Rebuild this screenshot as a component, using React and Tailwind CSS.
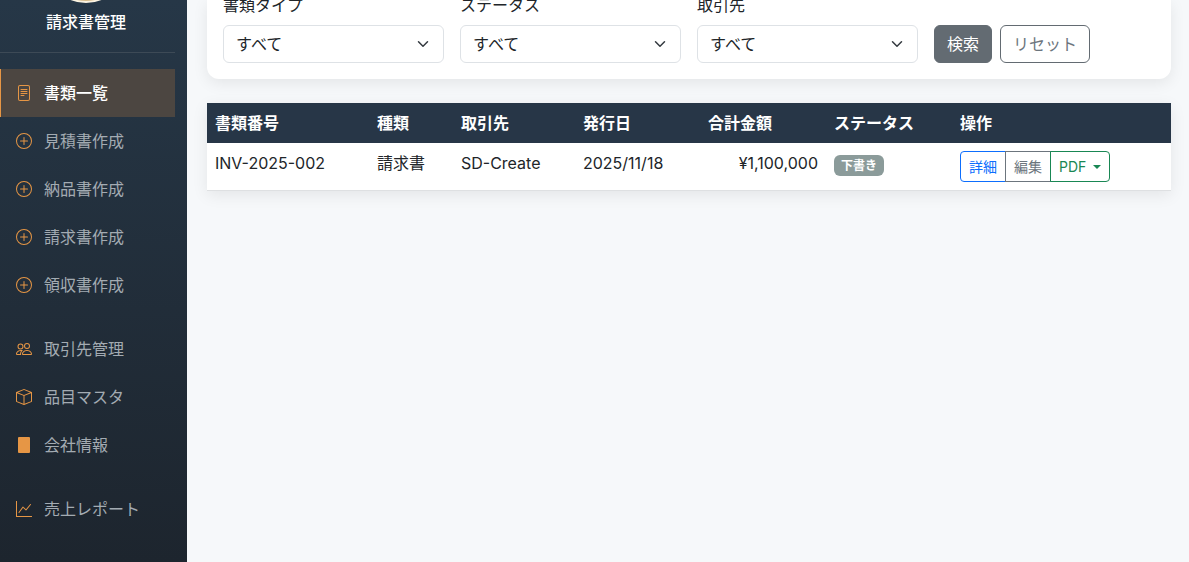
import {
  BsBox,
  BsFileText,
  BsGraphUp,
  BsPeople,
  BsPlusCircle,
} from "react-icons/bs";

function SolidPageIcon(props) {
  return (
    <svg viewBox="0 0 16 16" fill="currentColor" {...props}>
      <rect x="2" width="12" height="16" rx="1" />
    </svg>
  );
}

const navGroups = [
  [
    { label: "書類一覧", icon: BsFileText, active: true },
    { label: "見積書作成", icon: BsPlusCircle },
    { label: "納品書作成", icon: BsPlusCircle },
    { label: "請求書作成", icon: BsPlusCircle },
    { label: "領収書作成", icon: BsPlusCircle },
  ],
  [
    { label: "取引先管理", icon: BsPeople },
    { label: "品目マスタ", icon: BsBox },
    { label: "会社情報", icon: SolidPageIcon },
  ],
  [{ label: "売上レポート", icon: BsGraphUp }],
];

const filters = [
  { id: "doc-type", label: "書類タイプ" },
  { id: "status", label: "ステータス" },
  { id: "client", label: "取引先" },
];

const columns = [
  { label: "書類番号", width: "w-[162px]" },
  { label: "種類", width: "w-[84px]" },
  { label: "取引先", width: "w-[122px]" },
  { label: "発行日", width: "w-[125px]" },
  { label: "合計金額", width: "w-[126px]" },
  { label: "ステータス", width: "w-[126px]" },
  { label: "操作", width: "" },
];

function NavItem({ label, icon: Icon, active }) {
  return (
    <li>
      <a
        href="#"
        aria-current={active ? "page" : undefined}
        className={
          active
            ? "flex items-center gap-3 border-l border-[#e69645] bg-[#4c4641] py-3 pl-[15px] font-medium text-white"
            : "flex items-center gap-3 py-3 pl-4 text-[#a3abb2]"
        }
      >
        <Icon className="size-4 shrink-0 text-[#e69645]" aria-hidden="true" />
        <span>{label}</span>
      </a>
    </li>
  );
}

function Sidebar() {
  return (
    <aside className="w-[187px] shrink-0 bg-linear-to-b from-[#263747] to-[#1d252e] pr-3">
      <header className="flex flex-col items-center border-b border-[#3d4a56] pr-[3px] pb-[18px]">
        <div className="flex h-[3px] items-end overflow-hidden">
          <div className="size-20 shrink-0 rounded-full border-2 border-[#fbf3e2] bg-[#d9bd8c]" />
        </div>
        <p className="mt-[7px] font-medium text-white">請求書管理</p>
      </header>
      <nav className="mt-4 flex flex-col gap-4">
        {navGroups.map((group) => (
          <ul key={group[0].label}>
            {group.map((item) => (
              <NavItem key={item.label} {...item} />
            ))}
          </ul>
        ))}
      </nav>
    </aside>
  );
}

function FilterSelect({ id, label }) {
  return (
    <div>
      <div className="flex h-[17px] items-end">
        <label htmlFor={id} className="shrink-0">
          {label}
        </label>
      </div>
      <div className="mt-2 grid">
        <select
          id={id}
          className="col-start-1 row-start-1 h-[38px] w-full appearance-none rounded-md border border-[#dee2e6] bg-white pr-9 pl-3"
        >
          <option>すべて</option>
        </select>
        <svg
          viewBox="0 0 16 16"
          className="pointer-events-none col-start-1 row-start-1 mr-[15px] size-3 self-center justify-self-end"
          aria-hidden="true"
        >
          <path
            d="m2 5 6 6 6-6"
            fill="none"
            stroke="#343a40"
            strokeWidth="2"
            strokeLinecap="round"
            strokeLinejoin="round"
          />
        </svg>
      </div>
    </div>
  );
}

function DocumentTable() {
  return (
    <table className="mt-6 w-full table-fixed bg-white text-left shadow-[0_4px_15px_rgba(0,0,0,0.08)]">
      <thead className="bg-[#273647] text-white">
        <tr>
          {columns.map((column) => (
            <th key={column.label} className={`p-2 font-bold ${column.width}`}>
              {column.label}
            </th>
          ))}
        </tr>
      </thead>
      <tbody>
        <tr className="border-b border-[#dee0e2] align-top">
          <td className="p-2">INV-2025-002</td>
          <td className="p-2">請求書</td>
          <td className="p-2">SD-Create</td>
          <td className="p-2">2025/11/18</td>
          <td className="p-2 text-right">¥1,100,000</td>
          <td className="px-2 py-3">
            <span className="block w-fit rounded-md bg-[#8b9b9a] px-[7px] text-xs leading-[21px] font-bold text-white">
              下書き
            </span>
          </td>
          <td className="p-2">
            <div className="flex text-sm leading-[21px]">
              <button className="rounded-l border border-[#0d6efd] px-2 py-1 text-[#0d6efd]">
                詳細
              </button>
              <button className="-ml-px border border-[#6c757d] px-2 py-1 text-[#6c757d]">
                編集
              </button>
              <button className="-ml-px flex items-center gap-[7px] rounded-r border border-[#198754] px-2 py-1 text-[#198754]">
                PDF
                <svg viewBox="0 0 8 4" className="h-1 w-2" aria-hidden="true">
                  <path d="M0 0h8L4 4z" fill="currentColor" />
                </svg>
              </button>
            </div>
          </td>
        </tr>
      </tbody>
    </table>
  );
}

export default function App() {
  return (
    <div className="flex min-h-screen bg-[#f6f8fa] font-['Inter','Noto_Sans_CJK_JP',sans-serif] text-base text-[#212529]">
      <Sidebar />
      <main className="min-w-0 flex-1 pr-[18px] pl-5">
        <form
          className="grid grid-cols-4 items-end gap-4 rounded-b-xl bg-white px-4 pb-4 shadow-[0_4px_15px_rgba(0,0,0,0.08)]"
          onSubmit={(event) => event.preventDefault()}
        >
          {filters.map((filter) => (
            <FilterSelect key={filter.id} {...filter} />
          ))}
          <div className="flex gap-2">
            <button
              type="submit"
              className="h-[38px] rounded-md border border-[#636b72] bg-[#636b72] px-3 text-white"
            >
              検索
            </button>
            <button
              type="reset"
              className="h-[38px] rounded-md border border-[#636b72] px-3 text-[#6c757d]"
            >
              リセット
            </button>
          </div>
        </form>
        <DocumentTable />
      </main>
    </div>
  );
}
